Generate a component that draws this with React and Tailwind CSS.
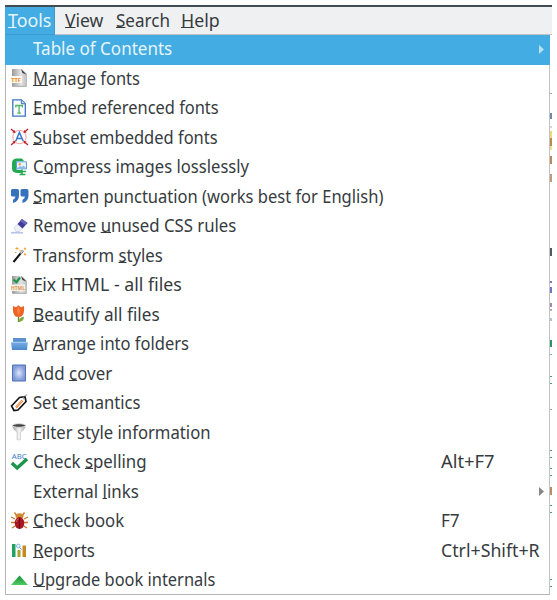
import React, { useLayoutEffect, useRef, useState } from "react";

function Label({ text, mark = -1, width }) {
  const ref = useRef(null);
  const [scale, setScale] = useState(1);
  useLayoutEffect(() => {
    setScale(width / ref.current.offsetWidth);
  }, [width]);
  return (
    <span className="block" style={{ width }}>
      <span ref={ref} className="inline-block origin-left whitespace-pre" style={{ transform: `scaleX(${scale})` }}>
        {mark < 0 ? text : (
          <>
            {text.slice(0, mark)}
            <span className="underline decoration-1 underline-offset-[0px] [text-decoration-skip-ink:none]">{text[mark]}</span>
            {text.slice(mark + 1)}
          </>
        )}
      </span>
    </span>
  );
}

const page = (
  <>
    <path d="M1 0h10l5 5v12.500H1z" fill="url(#paper)" />
    <path d="M10 0l5.500 5.500-4-1.500z" fill="#34393b" />
    <path d="M1.500 17.300h14" stroke="#aaa" />
  </>
);

const icons = {
  ttf: (
    <>
      {page}
      <path d="M0 7h11v7H0z" fill="#f8f6f1" />
      <text x="0.300" y="13" fontSize="6" fontWeight="800" fill="#f08a1c" textLength="9.500" lengthAdjust="spacingAndGlyphs">TTF</text>
    </>
  ),
  embed: (
    <>
      <path d="M1.800 .8h8.700l3.800 4v12.400H1.800z" fill="#fff" stroke="#3d73c4" strokeWidth="1.300" />
      <path d="M10.300 .8v4h4" fill="#b7d0f2" stroke="#3d73c4" />
      <path d="M4.800 8.500v-2h6.600v2M8.100 6.500v7.500M6.300 14.100h3.600" fill="none" stroke="#4bb563" strokeWidth="1.300" />
    </>
  ),
  subset: (
    <>
      <circle cx="8.500" cy="9" r="6.700" fill="#fff" stroke="#e88" strokeWidth=".8" />
      <path d="M4.700 13.300L8.400 4.500l3.900 8.800M6 10.500h4.800" fill="none" stroke="#3976ca" strokeWidth="1.500" />
      <path d="M0 1l4 3.500M17 1l-4 3.500M0 17l4-3.500M17 17l-4-3.500" stroke="#c51f25" strokeWidth="1.300" />
      <path d="M4.500 4.800l-3.200-.4 2.400-2.400zM12.500 4.800l3.200-.4L13.300 2zM4.500 13l-3.200.4L3.700 15.800zM12.500 13l3.200.4-2.400 2.400z" fill="#c51f25" />
    </>
  ),
  compress: (
    <>
      <path d="M5 .5h6l2 2.500H7Q5 3 5 5v5q0 2 2 2h4v3H6q-5-.5-5-4.500V5Q1 1 5 .5z" fill="#24a950" />
      <path d="M5.500 3.800h10v7h-10z" fill="#eaf5ff" stroke="#5c9ddd" strokeWidth="1" />
      <path d="M6.500 10l2.500-2 2 1 1.500-1.500 2.500 2.500z" fill="#8ab9e9" />
      <circle cx="8.800" cy="6.300" r="1.200" fill="#f4a13a" />
      <path d="M7 13.500h8M11 11.500v5M8.500 16.500h6" stroke="#24a950" strokeWidth="1.500" fill="none" />
    </>
  ),
  quotes: (
    <path d="M1.500 2h4.800Q8 2 8 4v4.500Q8 14.500 2 16v-3.300q2.200-.9 2.400-3.200H1.500Q0 9.500 0 8V3.500Q0 2 1.500 2zM11 2h4.800q1.700 0 1.700 2v4.500q0 6-6 7.500v-3.300q2.200-.9 2.400-3.200H11q-1.500 0-1.500-1.500V3.500Q9.500 2 11 2z" fill="#3671bd" />
  ),
  eraser: (
    <>
      <path d="M0 15.700h12" stroke="#b4c5e9" strokeWidth="1.700" />
      <path d="M3 11l3.500-3.800 5 4-3 3.300H5z" fill="#eef0f8" stroke="#bbc1dc" strokeWidth=".6" />
      <path d="M6.500 7L11 2l5.500 4-5 5.500z" fill="#403b99" />
      <path d="M11 2l5.500 4-2 2-5.500-4z" fill="#6965b8" />
    </>
  ),
  wand: (
    <>
      <path d="M2.500 16L12 4.500" stroke="#111" strokeWidth="2" />
      <path d="M9.500 7.500l2.500-3" stroke="#ddd" strokeWidth="1.400" />
      <path d="M6 1v3M4.500 2.500h3M14 1.500v2.500M12.800 2.800h2.400M14 7v2.500M12.800 8.300h2.400M9 3.500v1.500M4 6.500h1.500" stroke="#f1a334" strokeWidth="1" />
    </>
  ),
  html: (
    <>
      {page}
      <path d="M0 8.500h14v6.500H0z" fill="#f4f1ea" />
      <path d="M2.500 3.500l3 2.700L9 1.500" stroke="#17964a" strokeWidth="2.200" fill="none" />
      <text x="0" y="14.300" fontSize="6" fontWeight="700" fill="#df944d" textLength="14" lengthAdjust="spacingAndGlyphs">HTML</text>
    </>
  ),
  tulip: (
    <>
      <path d="M7.500 9v8" stroke="#63913b" strokeWidth="1.400" />
      <path d="M7.500 17.300q0-5 5.500-5.500 0 4.500-5.500 5.500z" fill="#83a83a" />
      <path d="M2 1L5 2.300 7.500 .2 10 2.300l3-1.300q.8 9-3 10.800H5Q1.300 10 2 1z" fill="#ee6427" />
      <path d="M7.500 1.500Q4.800 5 7.500 10q2.700-5 0-8.500z" fill="#f98445" />
    </>
  ),
  folder: (
    <>
      <path d="M2 3h13v4.500H2z" fill="#5b91d0" />
      <path d="M0 7h16.800l-.8 8H1z" fill="url(#folder)" />
      <path d="M0 7.300h17" stroke="#b0d2f4" />
    </>
  ),
  cover: (
    <>
      <path d="M1.500 1h13v16h-13z" fill="url(#cover)" stroke="#5070b8" />
      <path d="M3 2.500h10v13H3z" fill="none" stroke="#8da7df" strokeDasharray="1.500 1" />
    </>
  ),
  tag: (
    <>
      <path d="M.5 12L8.500 3.500l5.500-.8 1 4.800-8 8.500-4 .5z" fill="#fff" stroke="#151515" strokeWidth="1.700" />
      <path d="M5 13.500l6.500-7" stroke="#e8863d" strokeWidth="2.400" />
      <path d="M5.300 13.200l6-6.500" stroke="#fff0e4" strokeWidth=".5" />
      <path d="M12.500 5.500Q11.500 1.500 15 2l1-2" stroke="#999" fill="none" strokeWidth=".8" />
    </>
  ),
  funnel: (
    <>
      <path d="M1.500 2.500Q2 7 6 9v7.800h3.500V9Q14 7 14.500 2.500z" fill="url(#metal)" stroke="#bbb" strokeWidth=".5" />
      <ellipse cx="8" cy="2.500" rx="6.500" ry="1.800" fill="#454545" stroke="#ddd" />
    </>
  ),
  spelling: (
    <>
      <text x="0.800" y="5.800" fontSize="7.500" fill="#3d7cca" textLength="15" lengthAdjust="spacingAndGlyphs">ABC</text>
      <path d="M.8 10l5.400 5L16 6" stroke="#19964a" strokeWidth="3.400" fill="none" />
    </>
  ),
  bug: (
    <>
      <path d="M4 7L0 5M4 10.500H0M5 13.500l-4 2.500M13 7l4-2M13 10.500h4M12 13.500l4 2.500M6 4L3.500 .5M11 4l2.500-3.500" stroke="#c87a2d" strokeWidth="1.300" fill="none" />
      <ellipse cx="8.500" cy="4" rx="4" ry="2.800" fill="#d28a31" />
      <ellipse cx="8.500" cy="11" rx="4.800" ry="6" fill="#a91520" />
      <path d="M8.500 6v11" stroke="#680e16" />
      <path d="M5.500 10q0-3 2-3" stroke="#d55b5b" fill="none" />
    </>
  ),
  reports: (
    <>
      <path d="M1 3h3.500v13H1z" fill="#24a060" />
      <path d="M6.500 9h3v7h-3z" fill="#a7a52d" />
      <path d="M11.500 4.500H15V16h-3.500z" fill="#c58b22" />
      <circle cx="7.300" cy="5" r="1.900" fill="#e7f4ff" stroke="#70a9e5" strokeWidth=".8" />
      <path d="M8.700 6.500l2 2" stroke="#4c84cf" />
    </>
  ),
  upgrade: <path d="M8.500 4.500L17 14H0z" fill="url(#green)" />,
};

const rows = [
  ["Table of Contents", -1, 139, null],
  ["Manage fonts", 0, 107, "ttf"],
  ["Embed referenced fonts", 0, 186, "embed"],
  ["Subset embedded fonts", 0, 185, "subset"],
  ["Compress images losslessly", 1, 216, "compress"],
  ["Smarten punctuation (works best for English)", 0, 350.5, "quotes"],
  ["Remove unused CSS rules", 7, 203, "eraser"],
  ["Transform styles", 10, 130, "wand"],
  ["Fix HTML - all files", 0, 149, "html"],
  ["Beautify all files", 0, 127, "tulip"],
  ["Arrange into folders", 0, 156, "folder"],
  ["Add cover", 4, 79, "cover"],
  ["Set semantics", 4, 107, "tag"],
  ["Filter style information", 0, 178, "funnel"],
  ["Check spelling", 6, 114, "spelling", "Alt+F7", 54],
  ["External links", 9, 106, null],
  ["Check book", 0, 91, "bug", "F7", 19],
  ["Reports", 0, 62, "reports", "Ctrl+Shift+R", 98.5],
  ["Upgrade book internals", 0, 182.5, "upgrade"],
];

const fragments = [
  [93, 1, "bg-gray-400"], [113, 6, "bg-[#7188a8]"], [126, 2, "bg-gray-300"],
  [131, 7, "bg-[#f0d878]"], [138, 8, "bg-[#b88b4b]"], [146, 4, "bg-[#f3df95]"],
  [156, 8, "bg-[#b68b62]"], [174, 8, "bg-[#c09c79]"], [248, 8, "bg-[#535960]"],
  [281, 2, "bg-[#7478ba]"], [287, 6, "bg-[#7478ba]"], [303, 4, "bg-[#a088b7]"],
  [309, 2, "bg-[#b9a8c4]"], [318, 3, "bg-[#b3c2d0]"], [340, 7, "bg-[#359166]"],
  [354, 1, "bg-[#72aad0]"], [376, 1, "bg-[#469e6c]"], [383, 1, "bg-[#469e6c]"],
  [409, 1, "bg-[#8aa9d7]"], [450, 1, "bg-[#469e6c]"], [457, 1, "bg-[#469e6c]"],
  [468, 1, "bg-[#469e6c]"], [475, 1, "bg-[#469e6c]"], [487, 8, "bg-[#b88d66]"],
  [505, 1, "bg-[#469e6c]"], [512, 1, "bg-[#469e6c]"], [579, 1, "bg-[#469e6c]"],
  [586, 1, "bg-[#469e6c]"],
].map(([y, h, color], i, all) => ({
  gap: y - (i ? all[i - 1][0] + all[i - 1][1] : 35), h, color,
}));

export default function App() {
  return (
    <div className="flex h-[600px] w-[557px] flex-col overflow-hidden bg-white pl-[5px] pt-[5px] font-['Noto_Sans',sans-serif] text-[18px] leading-[27px] text-[#363b40]">
      <svg className="absolute h-0 w-0">
        <defs>
          <linearGradient id="paper"><stop stopColor="#999" /><stop offset=".6" stopColor="#e5e5e5" /><stop offset="1" stopColor="#bbb" /></linearGradient>
          <linearGradient id="folder" x2="0" y2="1"><stop stopColor="#78aee6" /><stop offset="1" stopColor="#4b88ca" /></linearGradient>
          <radialGradient id="cover"><stop stopColor="#dce5fb" /><stop offset="1" stopColor="#7994d5" /></radialGradient>
          <linearGradient id="metal"><stop stopColor="#999" /><stop offset=".5" stopColor="#f7f7f7" /><stop offset="1" stopColor="#aaa" /></linearGradient>
          <linearGradient id="green" x2="0" y2="1"><stop stopColor="#168d3c" /><stop offset="1" stopColor="#50cc5d" /></linearGradient>
        </defs>
      </svg>
      <div className="h-0.5 w-[547px] shrink-0 bg-[#414b53]" />
      <div className="flex h-[28px] w-[547px] shrink-0 border-b border-[#c0c2c3] bg-[#eff0f1]">
        <div className="h-[28px] w-[50px] border-b border-r border-[#3a9bd0] bg-[#43ace2] pl-[3px] text-[#e7f5fc]"><Label text="Tools" mark={0} width={43.5} /></div>
        <div className="ml-[10px] w-[50.5px]"><Label text="View" mark={0} width={38} /></div>
        <div className="w-[65px]"><Label text="Search" mark={0} width={54} /></div>
        <div><Label text="Help" mark={0} width={38.5} /></div>
      </div>
      <div className="flex">
        <div className="flex h-[560px] w-[545px] flex-col border-b border-l border-r border-[#b5b5b5] border-r-[#c2c2c2]">
          {rows.map(([text, mark, width, icon, shortcut, keyWidth], i) => (
            <div key={text} className={`flex h-[29.5px] shrink-0 items-center pb-[2.5px] ${i === 0 ? "-ml-px -mr-px bg-[#43ace2] pl-px text-[#e7f5fc]" : ""}`}>
              <div className="ml-[5px] flex h-[18px] w-[22px] shrink-0">
                {icon && <svg width="18" height="18" viewBox="0 0 18 18" className="overflow-visible">{icons[icon]}</svg>}
              </div>
              <div className="w-[408px] shrink-0"><Label text={text} mark={mark} width={width} /></div>
              {shortcut && <Label text={shortcut} width={keyWidth} />}
              {(i === 0 || i === 15) && (
                <svg className={i === 0 ? "ml-[98px] mt-px text-[#b9e0f5]" : "ml-[98px] mt-px text-[#85888a]"} width="5" height="9" viewBox="0 0 5 9"><path d="M0 0l5 4.500L0 9z" fill="currentColor" /></svg>
              )}
            </div>
          ))}
        </div>
        <div className="flex w-0.5 shrink-0 flex-col">
          {fragments.map(({ gap, h, color }, i) => (
            <div key={i} className={`shrink-0 ${color}`} style={{ height: h, marginTop: gap }} />
          ))}
        </div>
      </div>
    </div>
  );
}
